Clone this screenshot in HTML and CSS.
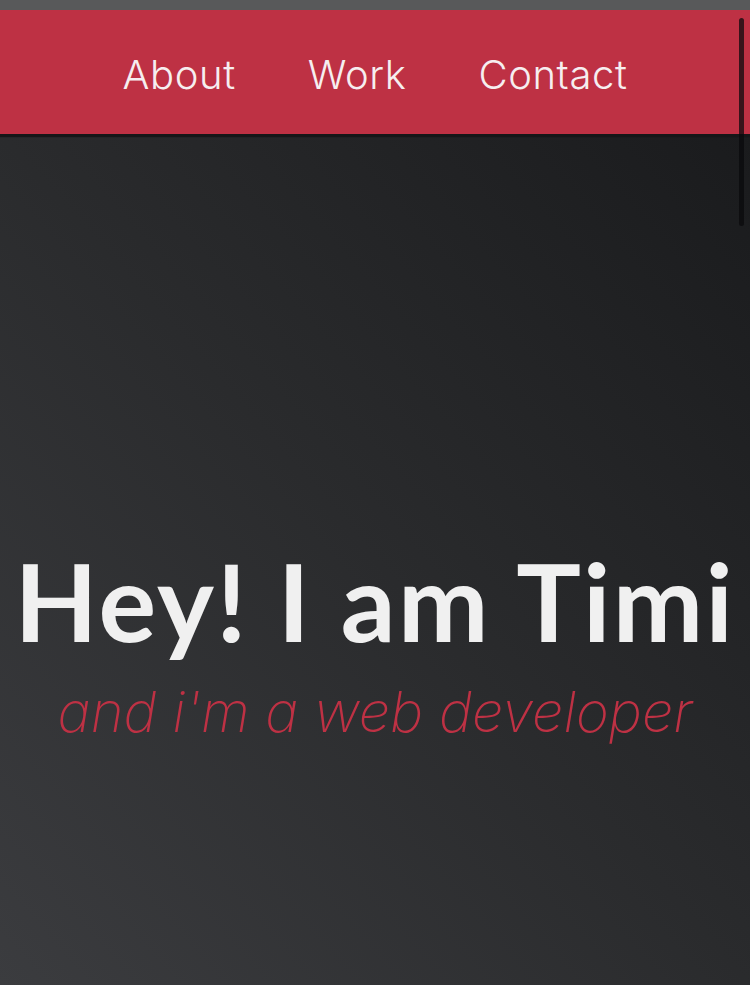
FILE: index.html
```html
<!DOCTYPE html>
<html lang="en">
<head>
<meta charset="utf-8">
<title>Timi</title>
<link rel="stylesheet" href="styles.css">
</head>
<body>
<header class="nav">
  <ul class="nav-list">
    <li><a class="nav-link" href="#about">About</a></li>
    <li><a class="nav-link" href="#work">Work</a></li>
    <li><a class="nav-link" href="#contact">Contact</a></li>
  </ul>
</header>
<main class="hero">
  <h1 class="hero-title">Hey! I am Timi</h1>
  <p class="hero-sub">and i'm a web developer</p>
</main>
<div class="scroll-thumb"></div>
</body>
</html>
```

FILE: styles.css
```css
html, body {
  margin: 0;
  padding: 0;
  height: 985px;
  overflow: hidden;
}
body {
  background: #58595a;
  padding-top: 10px;
  box-sizing: border-box;
  font-family: "Inter", "Lato", sans-serif;
}
.nav {
  position: relative;
  z-index: 2;
  height: 124px;
  background: #be3144;
  box-shadow: 0 3px 1px #161618;
  display: flex;
  align-items: center;
  justify-content: center;
}
.nav-list {
  list-style: none;
  margin: 0;
  padding: 4px 0 0 0;
  display: flex;
  gap: 72px;
}
.nav-link {
  color: #f6eef0;
  text-decoration: none;
  font-family: "Inter", sans-serif;
  font-weight: 300;
  font-size: 40px;
  letter-spacing: 0.6px;
}
.hero {
  height: 851px;
  background: linear-gradient(to top right, #3b3c3f 0%, #2a2b2d 50%, #1a1b1d 100%);
  display: flex;
  flex-direction: column;
  align-items: center;
  justify-content: flex-start;
  padding-top: 412px;
  box-sizing: border-box;
}
.hero-title {
  margin: 0;
  color: #f0f0f0;
  font-family: "Lato", sans-serif;
  font-weight: 700;
  font-size: 108px;
  line-height: 1;
  letter-spacing: 2.4px;
  white-space: nowrap;
}
.hero-sub {
  margin: 30px 0 0 0;
  color: #be3144;
  font-family: "Inter", sans-serif;
  font-weight: 200;
  font-style: italic;
  font-size: 56px;
  line-height: 1;
  white-space: nowrap;
}
.scroll-thumb {
  position: absolute;
  top: 18px;
  right: 6px;
  width: 5px;
  height: 208px;
  border-radius: 3px;
  background: rgba(10, 10, 12, 0.75);
  z-index: 3;
}
```
